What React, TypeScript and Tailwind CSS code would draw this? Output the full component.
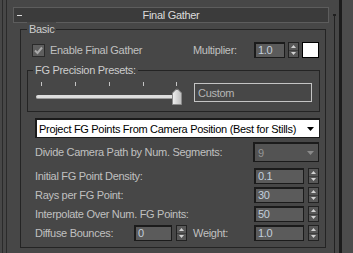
import React from 'react';

const Arrow = ({ down, color = '#d2d2d2' }: { down?: boolean; color?: string }) => (
  <svg width="5" height="3" viewBox="0 0 5 3">
    <path d={down ? 'M0 0H5L2.5 3Z' : 'M2.5 0L5 3H0Z'} fill={color} />
  </svg>
);

const Spinner = () => (
  <div className="w-[11px] h-[16px] border border-[#222] bg-[#575757] flex flex-col">
    <div className="flex-1 flex items-center justify-center border-b border-[#3d3d3d]">
      <Arrow />
    </div>
    <div className="flex-1 flex items-center justify-center">
      <Arrow down />
    </div>
  </div>
);

const Field = ({ value, className }: { value: string; className: string }) => (
  <div
    className={
      'h-[16px] border-t-2 border-l-2 border-r border-b border-[#1b1b1b] bg-[#5b5b5b] text-[#c3cfdc] pl-[2px] flex items-center leading-none ' +
      className
    }
  >
    {value}
  </div>
);

const Row = ({ label, value }: { label: string; value: string }) => (
  <div className="flex h-[16px] items-center">
    <div className="w-[233px] pl-[14px]">{label}</div>
    <Field value={value} className="w-[50px]" />
    <div className="ml-[4px]">
      <Spinner />
    </div>
  </div>
);

const ticks = [13, 47, 81, 115, 148];

export default function App() {
  return (
    <div className="w-[353px] h-[253px] bg-[#474747] flex overflow-hidden font-['Liberation_Sans',Arial,sans-serif] text-[11px] leading-[14px] tracking-[-0.3px] whitespace-nowrap text-[#c0c0c0]">
      {/* left edge */}
      <div className="w-[13px] flex shrink-0">
        <div className="w-[2px]" />
        <div className="w-px bg-[#2b2b2b]" />
        <div className="w-[3px]" />
        <div className="w-px bg-[#2b2b2b]" />
      </div>

      {/* rollout */}
      <div className="w-[316px] shrink-0 flex flex-col">
        <div className="mt-[7px] h-[16px] border border-[#5d5d5d] bg-[#3b3b3b] grid grid-cols-[20px_1fr_20px] items-center text-[#dcdcdc]">
          <div className="pl-[3px]">
            <div className="w-[5px] h-px bg-[#dcdcdc]" />
          </div>
          <div className="text-center">Final Gather</div>
          <div />
        </div>

        <div className="mt-[6px] ml-[7px] w-[306px] h-[219px] border border-[#242424] flex flex-col">
          <div className="-mt-[8px] ml-[6px] px-[2px] w-fit bg-[#474747] text-[#cdcdcd]">Basic</div>

          {/* enable row */}
          <div className="mt-[6px] flex h-[16px] items-center">
            <div className="w-[172px] pl-[11px] flex items-center">
              <div className="w-[13px] h-[13px] border border-[#2a2a2a] bg-[#5e5e5e] flex items-center justify-center">
                <svg width="11" height="11" viewBox="0 0 11 11">
                  <path d="M2 5.5L4.5 8L9 2.5" stroke="#a9a9a9" strokeWidth="2" fill="none" />
                </svg>
              </div>
              <span className="ml-[5px]">Enable Final Gather</span>
            </div>
            <div className="w-[61px]">Multiplier:</div>
            <Field value="1.0" className="w-[31px]" />
            <div className="ml-[3px]">
              <Spinner />
            </div>
            <div className="ml-[3px] w-[17px] h-[16px] bg-white border border-black" />
          </div>

          {/* FG precision presets */}
          <div className="mt-[12px] ml-[6px] w-[293px] h-[42px] border border-[#242424] flex flex-col">
            <div className="-mt-[8px] ml-[5px] px-[2px] w-fit bg-[#474747] text-[#cdcdcd]">FG Precision Presets:</div>
            <div className="mt-[4px] flex items-start">
              <div className="relative w-[158px] h-[25px]">
                {ticks.map((x) => (
                  <div key={x} className="absolute top-[1px] w-px h-[4px] bg-[#c4c4c4]" style={{ left: x }} />
                ))}
                <div className="absolute left-[8px] top-[14px] w-[140px] h-[4px] rounded-l-[2px] bg-[#dedede] border-b border-[#9a9a9a]" />
                <svg className="absolute left-[144px] top-[7px]" width="10" height="17" viewBox="0 0 10 17">
                  <defs>
                    <linearGradient id="th" x1="0" x2="1" y1="0" y2="0">
                      <stop offset="0" stopColor="#f0f0f0" />
                      <stop offset="1" stopColor="#bdbdbd" />
                    </linearGradient>
                  </defs>
                  <path d="M5 0.5L9.5 5V16.5H0.5V5Z" fill="url(#th)" stroke="#8a8a8a" strokeWidth="1" />
                  <rect x="4.5" y="0" width="1" height="2" fill="#3a3a3a" />
                </svg>
              </div>
              <div className="ml-[8px] mt-[2px] w-[118px] h-[19px] border border-[#c4c4c4] pl-[3px] flex items-center text-[#b6b6b6]">
                Custom
              </div>
            </div>
          </div>

          {/* mode dropdown */}
          <div className="mt-[6px] ml-[14px] w-[285px] h-[20px] bg-white border border-[#1a1a1a] border-t-2 border-l-2 flex items-center justify-between pl-[2px] pr-[5px] text-black">
            <span>Project FG Points From Camera Position (Best for Stills)</span>
            <svg width="7" height="4" viewBox="0 0 7 4">
              <path d="M0 0H7L3.5 4Z" fill="#000" />
            </svg>
          </div>

          {/* divide row */}
          <div className="mt-[4px] flex h-[20px] items-center">
            <div className="w-[232px] pl-[14px]">Divide Camera Path by Num. Segments:</div>
            <div className="w-[66px] h-[20px] border-t-2 border-l-2 border-r border-b border-[#1b1b1b] bg-[#535353] flex items-center justify-between pl-[3px] pr-[4px] text-[#959595]">
              <span>9</span>
              <svg width="7" height="4" viewBox="0 0 7 4">
                <path d="M0 0H7L3.5 4Z" fill="#8a8a8a" />
              </svg>
            </div>
          </div>

          <div className="mt-[6px] flex flex-col gap-[3px]">
            <Row label="Initial FG Point Density:" value="0.1" />
            <Row label="Rays per FG Point:" value="30" />
            <Row label="Interpolate Over Num. FG Points:" value="50" />
            <div className="flex h-[16px] items-center">
              <div className="w-[113px] pl-[14px]">Diffuse Bounces:</div>
              <Field value="0" className="w-[38px]" />
              <div className="ml-[4px]">
                <Spinner />
              </div>
              <div className="ml-[6px] w-[61px]">Weight:</div>
              <Field value="1.0" className="w-[50px]" />
              <div className="ml-[4px]">
                <Spinner />
              </div>
            </div>
          </div>
        </div>
      </div>

      {/* right edge / scroll bar */}
      <div className="w-[24px] shrink-0 flex">
        <div className="w-[4px]" />
        <div className="w-[3px] flex flex-col items-center">
          <div className="mt-[14px] w-[3px] h-[2px] bg-[#1f1f1f]" />
          <div className="w-px flex-1 bg-[#222]" />
        </div>
        <div className="w-[3px]" />
        <div className="w-[3px] bg-[#1c1c1c]" />
        <div className="flex-1 bg-[#4c4c4c]" />
      </div>
    </div>
  );
}
